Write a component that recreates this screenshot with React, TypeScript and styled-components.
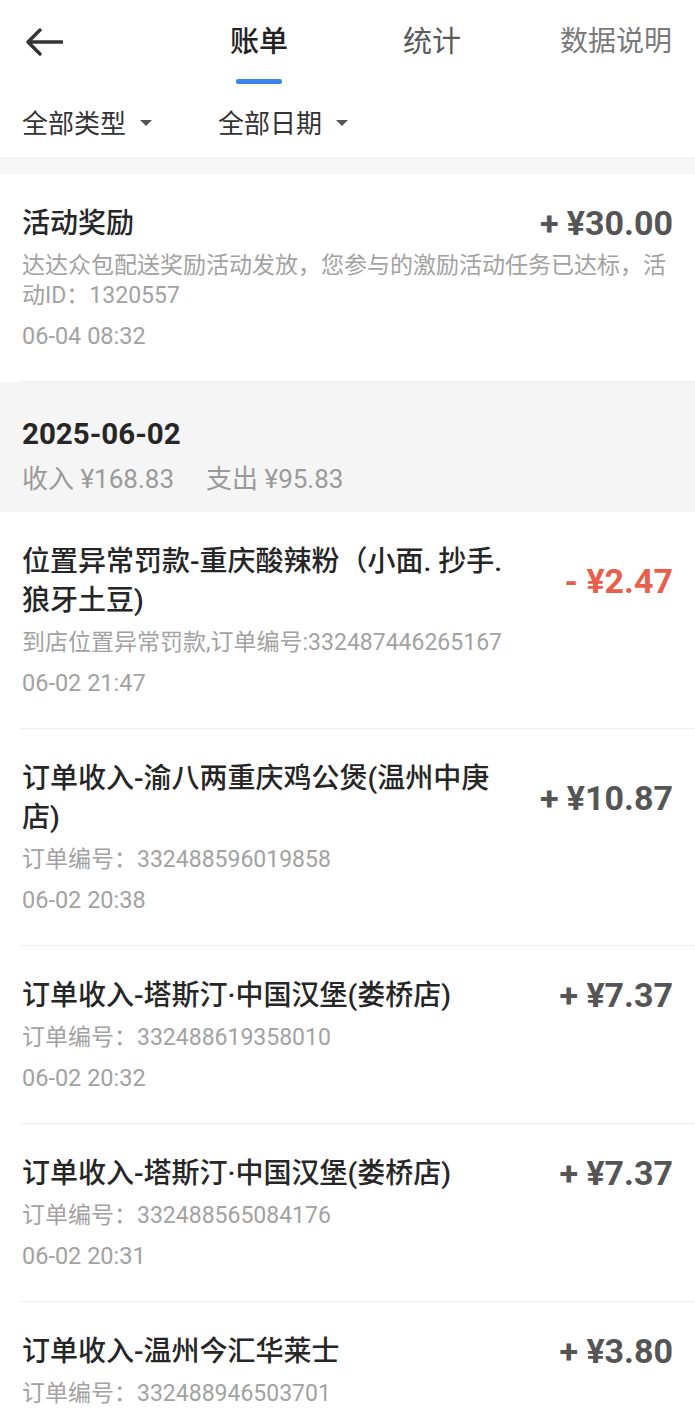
import React from "react";
import styled, { createGlobalStyle } from "styled-components";

const Global = createGlobalStyle`
  html, body { margin: 0; padding: 0; background: #ffffff; }
  body { font-family: Roboto, "Noto Sans CJK SC", sans-serif; -webkit-font-smoothing: antialiased; }
  * { box-sizing: border-box; }
`;

const Page = styled.div`
  width: 695px;
  background: #fff;
  overflow: hidden;
`;

const Header = styled.header`
  background: #fff;
  border-bottom: 1.5px solid #ededed;
`;

const TopBar = styled.div`
  height: 86px;
  display: flex;
  align-items: center;
  padding: 0 23px 0 25px;
`;

const BackButton = styled.div`
  width: 38px;
  height: 28px;
  display: flex;
  align-items: center;
  margin-top: -2px;
`;

const Tabs = styled.div`
  display: flex;
  align-items: center;
  flex: 1;
  margin-left: 167px;
`;

const Tab = styled.div<{ $active?: boolean; $offset?: number }>`
  position: relative;
  font-size: 29px;
  line-height: 40px;
  margin-top: -2px;
  margin-left: ${(p) => p.$offset ?? 0}px;
  color: ${(p) => (p.$active ? "#222" : "#5a5a5a")};
  font-weight: ${(p) => (p.$active ? 500 : 400)};
  &::after {
    content: "";
    display: ${(p) => (p.$active ? "block" : "none")};
    position: absolute;
    left: 50%;
    transform: translateX(-50%);
    bottom: -22px;
    width: 46px;
    height: 5px;
    border-radius: 2px;
    background: #3b86ee;
  }
`;

const ExtraLink = styled.div`
  margin-left: auto;
  font-size: 28px;
  line-height: 40px;
  margin-top: -2px;
  color: #7a7a7a;
`;

const FilterRow = styled.div`
  height: 72px;
  display: flex;
  align-items: center;
  padding-left: 22px;
  padding-bottom: 1px;
`;

const Filter = styled.div<{ $offset?: number }>`
  display: flex;
  align-items: center;
  margin-left: ${(p) => p.$offset ?? 0}px;
  font-size: 26px;
  color: #333;
`;

const Caret = styled.span`
  width: 0;
  height: 0;
  margin-left: 14px;
  margin-top: 2px;
  border-left: 6px solid transparent;
  border-right: 6px solid transparent;
  border-top: 6px solid #555;
`;

const Gap = styled.div`
  height: 15px;
  background: #f6f6f6;
`;

const Item = styled.div`
  margin-left: 20px;
  padding: 30px 22px 30px 2px;
  border-bottom: 1.5px solid #eeeeee;
`;

const ItemHead = styled.div`
  display: flex;
  align-items: center;
  justify-content: space-between;
`;

const Title = styled.div`
  max-width: 486px;
  font-size: 28px;
  line-height: 39px;
  color: #262626;
  font-weight: 500;
`;

const Amount = styled.div<{ $neg?: boolean }>`
  flex: none;
  margin-left: 20px;
  font-size: 34px;
  line-height: 39px;
  font-weight: 700;
  color: ${(p) => (p.$neg ? "#e8604c" : "#555555")};
  white-space: pre;
`;

const Desc = styled.div`
  margin-top: 8px;
  font-size: 23px;
  line-height: 30px;
  color: #a2a2a2;
`;

const Time = styled.div`
  margin-top: 10px;
  font-size: 23.5px;
  line-height: 30px;
  color: #a2a2a2;
`;

const Group = styled.div`
  background: #f5f5f5;
  padding: 34px 22px 17px;
`;

const GroupDate = styled.div`
  font-size: 29.5px;
  line-height: 36px;
  font-weight: 700;
  color: #262626;
`;

const GroupSummary = styled.div`
  margin-top: 11px;
  display: flex;
  gap: 32px;
  font-size: 26px;
  line-height: 32px;
  color: #9a9a9a;
`;

type Entry = { title: string; amount: string; neg?: boolean; desc: string; time?: string };

const first: Entry = {
  title: "活动奖励",
  amount: "+ ¥30.00",
  desc: "达达众包配送奖励活动发放，您参与的激励活动任务已达标，活动ID：1320557",
  time: "06-04 08:32",
};

const entries: Entry[] = [
  {
    title: "位置异常罚款-重庆酸辣粉（小面. 抄手. 狼牙土豆)",
    amount: "- ¥2.47",
    neg: true,
    desc: "到店位置异常罚款,订单编号:332487446265167",
    time: "06-02 21:47",
  },
  {
    title: "订单收入-渝八两重庆鸡公煲(温州中庚店)",
    amount: "+ ¥10.87",
    desc: "订单编号：332488596019858",
    time: "06-02 20:38",
  },
  {
    title: "订单收入-塔斯汀·中国汉堡(娄桥店)",
    amount: "+ ¥7.37",
    desc: "订单编号：332488619358010",
    time: "06-02 20:32",
  },
  {
    title: "订单收入-塔斯汀·中国汉堡(娄桥店)",
    amount: "+ ¥7.37",
    desc: "订单编号：332488565084176",
    time: "06-02 20:31",
  },
  {
    title: "订单收入-温州今汇华莱士",
    amount: "+ ¥3.80",
    desc: "订单编号：332488946503701",
    time: "06-02 20:12",
  },
];

const Row = ({ e }: { e: Entry }) => (
  <Item>
    <ItemHead>
      <Title>{e.title}</Title>
      <Amount $neg={e.neg}>{e.amount}</Amount>
    </ItemHead>
    <Desc>{e.desc}</Desc>
    {e.time && <Time>{e.time}</Time>}
  </Item>
);

export default function App() {
  return (
    <Page>
      <Global />
      <Header>
        <TopBar>
          <BackButton>
            <svg width="38" height="28" viewBox="0 0 38 28" fill="none">
              <path d="M37 14H3M15 2L3 14l12 12" stroke="#333" strokeWidth="3.4" strokeLinecap="round" strokeLinejoin="round" />
            </svg>
          </BackButton>
          <Tabs>
            <Tab $active>账单</Tab>
            <Tab $offset={115}>统计</Tab>
            <ExtraLink>数据说明</ExtraLink>
          </Tabs>
        </TopBar>
        <FilterRow>
          <Filter>
            全部类型
            <Caret />
          </Filter>
          <Filter $offset={66}>
            全部日期
            <Caret />
          </Filter>
        </FilterRow>
      </Header>
      <Gap />
      <Row e={first} />
      <Group>
        <GroupDate>2025-06-02</GroupDate>
        <GroupSummary>
          <span>收入 ¥168.83</span>
          <span>支出 ¥95.83</span>
        </GroupSummary>
      </Group>
      {entries.map((e, i) => (
        <Row key={i} e={e} />
      ))}
    </Page>
  );
}
